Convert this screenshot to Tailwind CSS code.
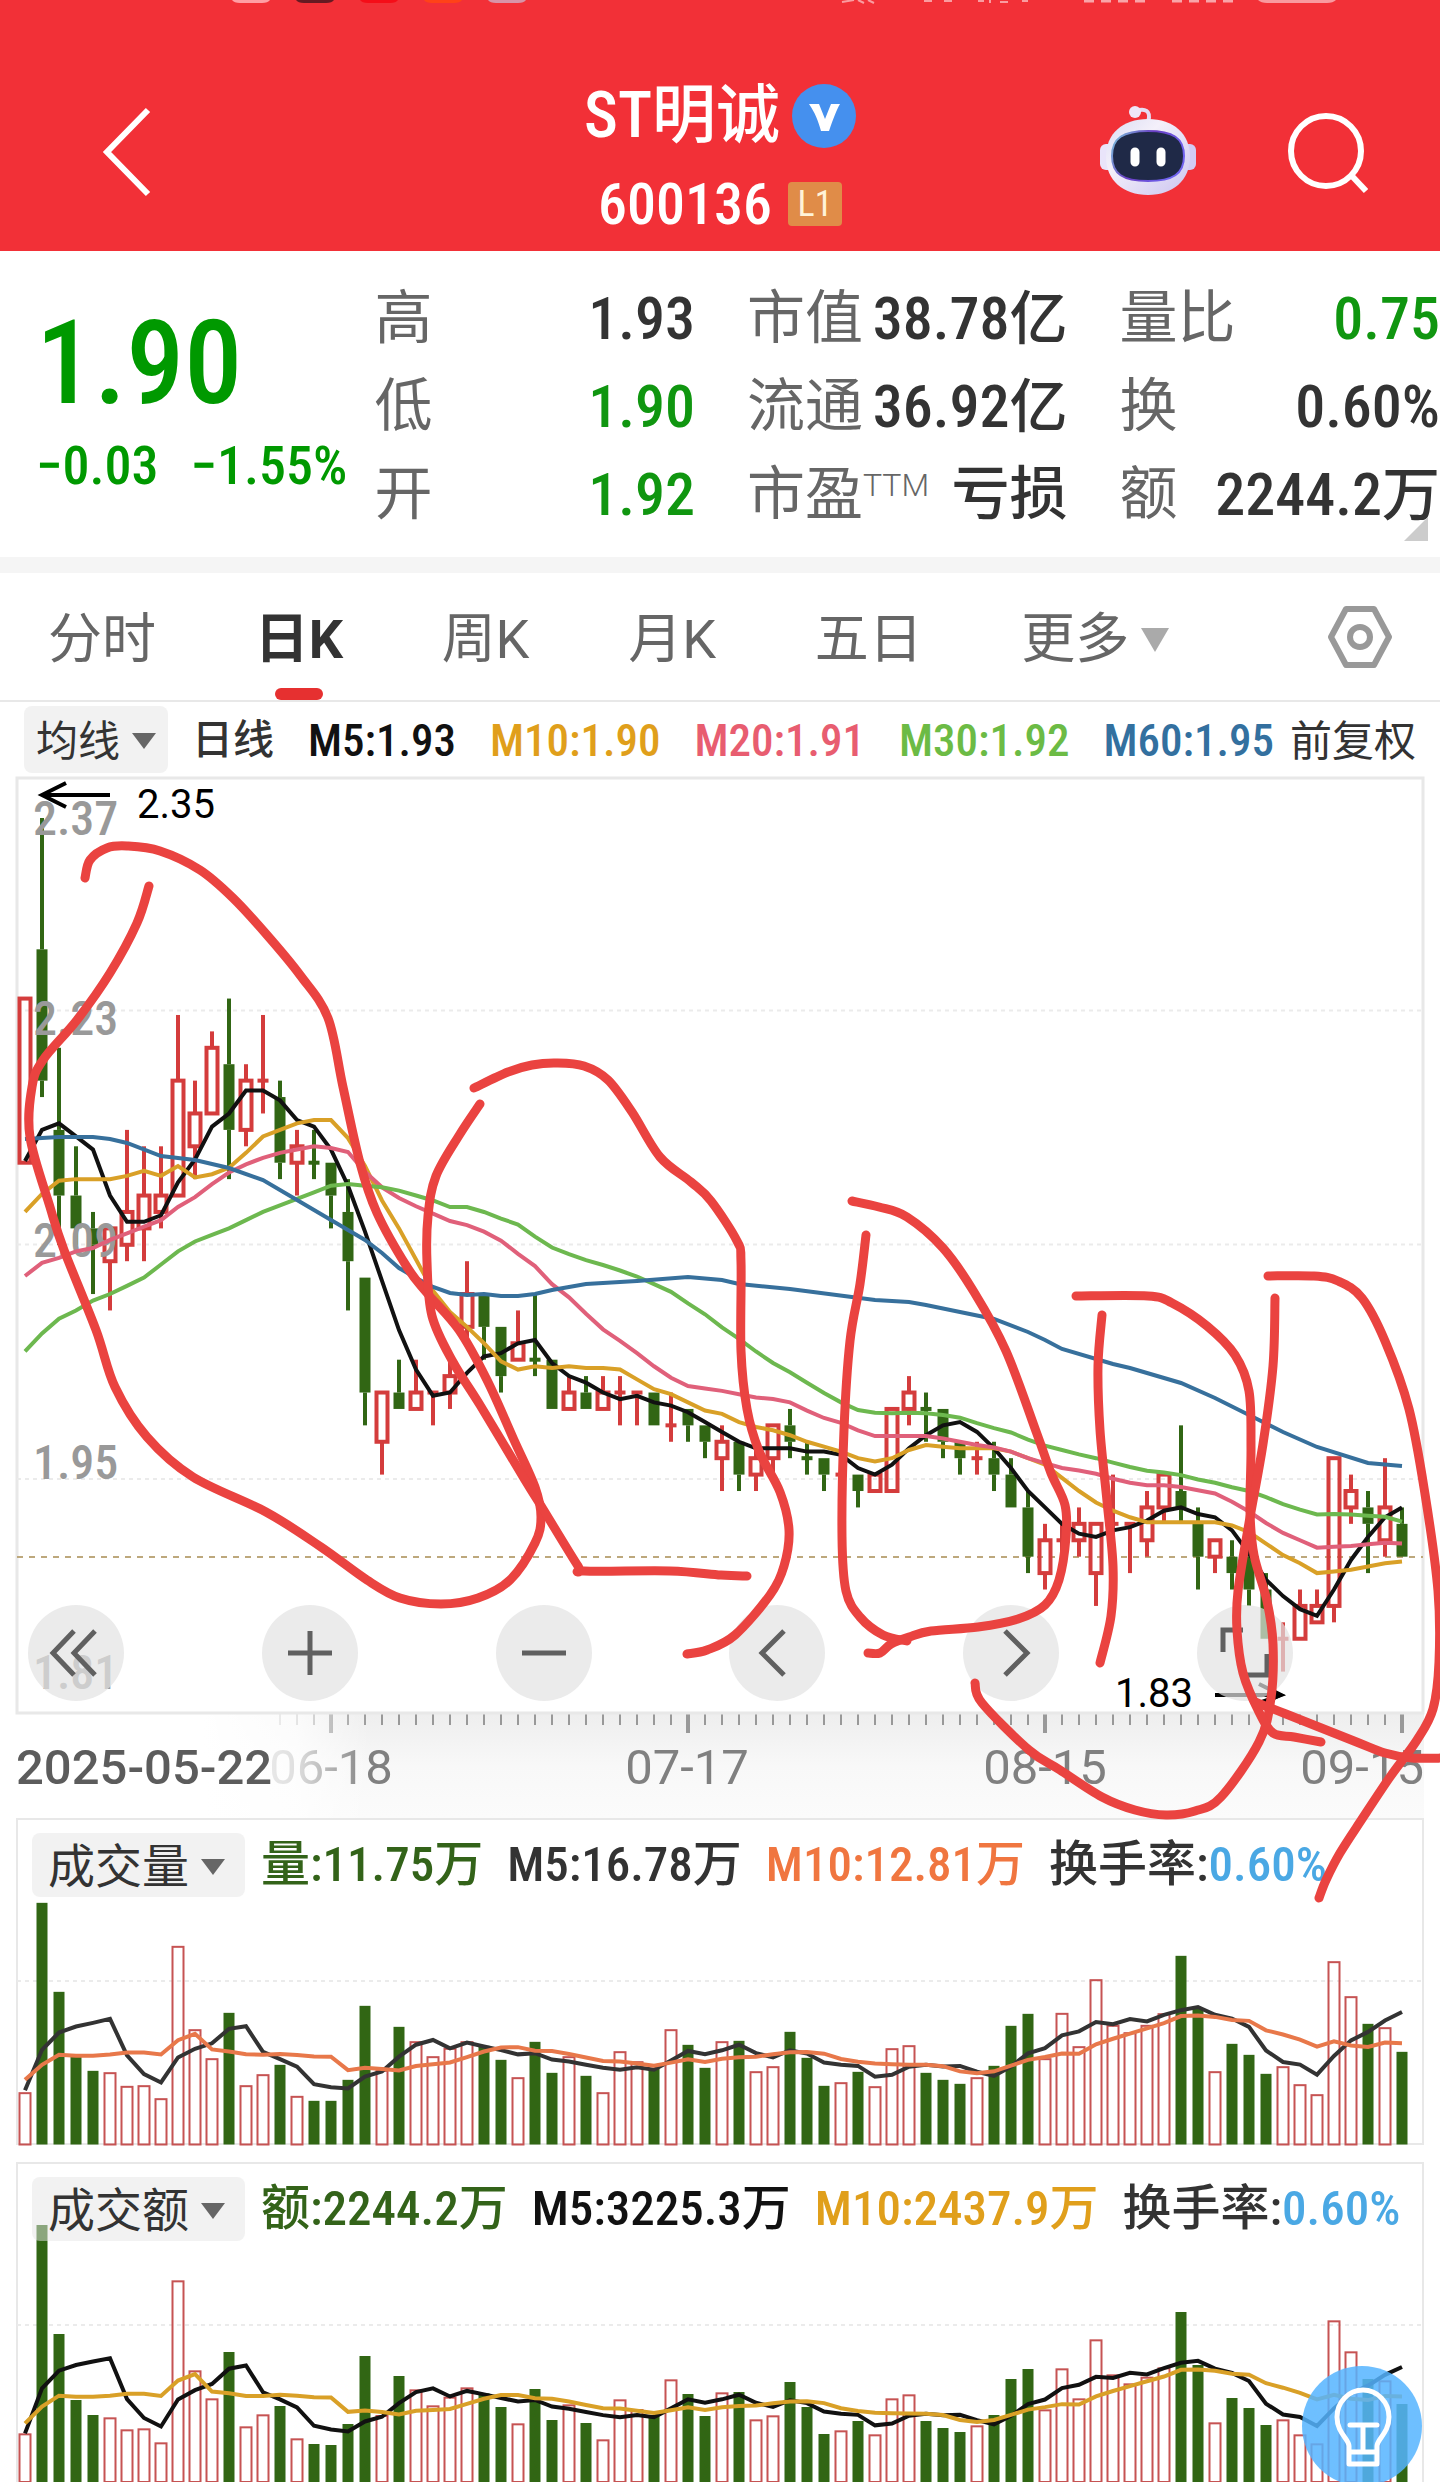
<!DOCTYPE html>
<html lang="zh-CN">
<head>
    <meta charset="UTF-8">
    <meta name="viewport" content="width=device-width, initial-scale=1.0">
    <title>ST明诚 600136</title>
    <script src="https://cdn.jsdelivr.net/npm/@tailwindcss/browser@4"></script>
</head>
<body class="bg-white text-[#333] font-['Roboto_Condensed','Roboto','Noto_Sans_CJK_SC',sans-serif] overflow-x-hidden">
    <!-- Header -->
    <header class="relative h-[251px] bg-[#f23037] text-white overflow-hidden">
        <svg class="absolute top-0 left-0 w-full h-1" viewBox="0 0 1440 4" preserveAspectRatio="none" aria-hidden="true">
            <path d="M232 0h38q-2 3-8 3h-22q-6 0-8-3" fill="#ff9ea4"/>
            <path d="M296 0h38q-2 3-8 3h-22q-6 0-8-3" fill="#661a22"/>
            <path d="M360 0h38q-2 3-8 3h-22q-6 0-8-3" fill="#f50d18"/>
            <path d="M424 0h38q-2 3-8 3h-22q-6 0-8-3" fill="#ff4218"/>
            <path d="M488 0h38q-2 3-8 3h-22q-6 0-8-3" fill="#d894a8"/>
            <path d="M842 2l12-2M858 0l6 3M868 0l6 3M924 1h8M944 1h8M978 1h6M990 0v3M1000 2h8M1022 1h6" stroke="#fa9ca0" stroke-width="2"/>
            <path d="M1084 1h10M1101 1h10M1118 1h10M1135 1h10M1172 1h10M1189 1h10M1206 1h10M1223 1h10" stroke="#f9a5a9" stroke-width="3"/>
            <path d="M1258 0h78q-3 3-9 3h-60q-6 0-9-3" fill="#f99a9f"/>
        </svg>
        <div class="h-full flex items-center justify-between pt-[52px] px-[72px]">
            <div class="flex-1">
                <button type="button" aria-label="返回" class="block p-6">
                    <svg class="w-[60px] h-[92px]" viewBox="0 0 60 92" fill="none" stroke="#fff" stroke-width="6"><path d="M52 4 11 46l41 42"/></svg>
                </button>
            </div>
            <div class="flex flex-col items-center pt-4">
                <h1 class="flex items-center gap-3 text-[64px] leading-[88px] font-medium">
                    ST明诚
                    <svg class="w-16 h-16" viewBox="0 0 64 64"><circle cx="32" cy="32" r="32" fill="#4590ee"/><path d="M17 20h10l6 15 6-15h9c-4 7-6 13-11 27h-8c-3-11-6-18-12-27" fill="#fff"/></svg>
                </h1>
                <p class="flex items-center gap-4 text-[58px] leading-[88px] font-medium">
                    600136
                    <span class="w-[54px] h-11 rounded-sm bg-[#e08c48] text-[#fff3d8] text-[36px] leading-[44px] text-center font-normal">L1</span>
                </p>
            </div>
            <div class="flex-1 flex justify-end items-center gap-[88px]">
                <button type="button" aria-label="智能助手">
                    <svg class="w-24 h-[92px]" viewBox="0 0 96 92">
                        <defs>
                            <linearGradient id="robot-head" x2="1" y2="1"><stop stop-color="#d9dcf4"/><stop offset=".35" stop-color="#f4f0fa"/><stop offset="1" stop-color="#cbc4f0"/></linearGradient>
                            <linearGradient id="robot-rim" x2="1" y2=".4"><stop stop-color="#7cc8dc"/><stop offset=".5" stop-color="#6a3fc4"/><stop offset="1" stop-color="#6f62ee"/></linearGradient>
                        </defs>
                        <path d="M48 16C52 4 44 2 36 5" fill="none" stroke="#e6dcf3" stroke-width="4"/>
                        <circle cx="35" cy="6" r="6" fill="#efe6f8"/>
                        <rect x="0" y="38" width="14" height="26" rx="6" fill="#e9e4fa"/>
                        <rect x="82" y="38" width="14" height="26" rx="6" fill="#d2cbf4"/>
                        <path d="M48 13c26 0 42 15 42 38S73 89 48 89 6 74 6 51s16-38 42-38" fill="url(#robot-head)"/>
                        <path d="M48 25c25 0 36 7 36 25S73 75 48 75 12 68 12 50s11-25 36-25" fill="#1f2947" stroke="url(#robot-rim)" stroke-width="2"/>
                        <path d="M35 46v10M61 46v10" stroke="#fff" stroke-width="9" stroke-linecap="round"/>
                    </svg>
                </button>
                <button type="button" aria-label="搜索">
                    <svg class="w-[84px] h-[84px]" viewBox="0 0 84 84" fill="none" stroke="#fff" stroke-width="6"><circle cx="42" cy="41" r="35"/><path d="m67 65 15 16"/></svg>
                </button>
            </div>
        </div>
    </header>

    <!-- Quote -->
    <section class="relative flex pt-6 h-[306px]">
        <div class="w-[26%] shrink-0 pl-9 text-[#009900]">
            <p class="text-[116px] leading-[120px] font-medium pt-7">1.90</p>
            <p class="flex gap-8 text-[54px] leading-[54px] font-medium pt-4 whitespace-nowrap"><span>−0.03</span><span>−1.55%</span></p>
        </div>
        <dl class="flex-1 grid grid-cols-3 gap-x-[52px] content-start text-[60px] leading-[87px] font-medium whitespace-nowrap">
            <div class="flex justify-between"><dt class="text-[58px] font-normal text-[#666]">高</dt><dd>1.93</dd></div>
            <div class="flex justify-between"><dt class="text-[58px] font-normal text-[#666]">市值</dt><dd>38.78<span class="text-[58px]">亿</span></dd></div>
            <div class="flex justify-between"><dt class="text-[58px] font-normal text-[#666]">量比</dt><dd class="text-[#109610]">0.75</dd></div>
            <div class="flex justify-between"><dt class="text-[58px] font-normal text-[#666]">低</dt><dd class="text-[#109610]">1.90</dd></div>
            <div class="flex justify-between"><dt class="text-[58px] font-normal text-[#666]">流通</dt><dd>36.92<span class="text-[58px]">亿</span></dd></div>
            <div class="flex justify-between"><dt class="text-[58px] font-normal text-[#666]">换</dt><dd>0.60%</dd></div>
            <div class="flex justify-between"><dt class="text-[58px] font-normal text-[#666]">开</dt><dd class="text-[#109610]">1.92</dd></div>
            <div class="flex justify-between"><dt class="flex text-[58px] font-normal text-[#666]">市盈<span class="font-['Roboto',sans-serif] text-[32px] leading-[68px] font-light">TTM</span></dt><dd class="text-[58px]">亏损</dd></div>
            <div class="flex justify-between"><dt class="text-[58px] font-normal text-[#666]">额</dt><dd>2244.2<span class="text-[58px]">万</span></dd></div>
        </dl>
        <svg class="absolute right-3 bottom-4 w-6 h-6" viewBox="0 0 24 24"><path d="M24 0v24H0z" fill="#ccc"/></svg>
    </section>

    <div class="h-4 bg-[#f5f5f5]"></div>

    <!-- Period tabs -->
    <nav class="h-[129px] flex items-center justify-between px-12 border-b-2 border-[#e8e8e8] font-['Roboto','Noto_Sans_CJK_SC',sans-serif] text-[54px] text-[#666] whitespace-nowrap">
        <button type="button" class="pt-1.5">分时</button>
        <button type="button" class="relative h-full pt-1.5 font-bold text-[#333]">日K<span class="absolute bottom-0 left-1/2 -translate-x-1/2 w-12 h-3 rounded-full bg-[#e63030]"></span></button>
        <button type="button" class="pt-1.5">周K</button>
        <button type="button" class="pt-1.5">月K</button>
        <button type="button" class="pt-1.5">五日</button>
        <button type="button" class="pt-1.5 flex items-center gap-3">更多<svg class="w-7 h-6" viewBox="0 0 28 24"><path d="M0 0h28L14 24z" fill="#aaa"/></svg></button>
        <button type="button" aria-label="设置" class="ml-[60px]">
            <svg class="w-16 h-[62px]" viewBox="0 0 64 62" fill="none" stroke="#999" stroke-width="6" stroke-linejoin="round"><path d="M18 3h28l15 28-15 28H18L3 31z"/><circle cx="32" cy="31" r="10"/></svg>
        </button>
    </nav>

    <!-- Moving average legend -->
    <div class="h-[74px] flex items-center justify-between px-6 text-[45px] font-medium whitespace-nowrap">
        <div class="flex items-center gap-6">
            <button type="button" class="h-[67px] px-3 rounded-lg bg-[#f2f2f2] flex items-center gap-3 pt-1 text-[42px] font-normal">均线<svg class="w-6 h-4" viewBox="0 0 24 16"><path d="M0 0h24L12 16z" fill="#666"/></svg></button>
            <span class="pt-1 text-[41px]">日线</span>
        </div>
        <span class="pt-1 text-[#111]">M5:1.93</span>
        <span class="pt-1 text-[#e09f1b]">M10:1.90</span>
        <span class="pt-1 text-[#e85d70]">M20:1.91</span>
        <span class="pt-1 text-[#6cbb45]">M30:1.92</span>
        <div class="flex items-center gap-4">
            <span class="pt-1 text-[#33709f]">M60:1.95</span>
            <span class="pt-1 text-[42px] font-normal">前复权</span>
        </div>
    </div>

    <!-- Charts share one coordinate space, so the pen layer can run across all of them -->
    <main class="relative">
        <div class="relative">
            <svg id="price-chart" class="block w-full h-auto overflow-visible" viewBox="0 776 1440 938">
                <path d="M17 1713V778H1423V1713Z" fill="none" stroke="#e8e8e8" stroke-width="3"/>
                <path d="M17 1010.5H1423M17 1244.5H1423M17 1479H1423" stroke="#ebebeb" stroke-width="2" stroke-dasharray="4 4"/>
                <path d="M17 1557H1423" stroke="#bda87c" stroke-width="2" stroke-dasharray="6 6"/>
                <g id="candles"></g>
                <g fill="#999" font-size="48" font-weight="500">
                    <text x="33" y="835">2.37</text>
                    <text x="33" y="1035">2.23</text>
                    <text x="33" y="1257">2.09</text>
                    <text x="33" y="1479">1.95</text>
                    <text x="33" y="1689">1.81</text>
                </g>
                <g id="price-lines" fill="none" stroke-width="4"></g>
                <g fill="none" stroke="#000" stroke-width="4"><path d="M110 795H43M66 783 42 795l24 12M1215 1695h66M1259 1684l22 11-22 8"/></g>
                <path d="m1268 1688 17 7-17 8z"/>
                <g class="font-['Roboto',sans-serif]" font-size="40">
                    <text x="137" y="818">2.35</text>
                    <text x="1115" y="1707">1.83</text>
                </g>
            </svg>
            <div class="absolute inset-x-0 bottom-[13px] flex justify-between pl-7 pr-[147px]">
                <button type="button" aria-label="最早" class="w-24 h-24 rounded-full bg-[#e3e3e3]/70"><svg viewBox="0 0 96 96" fill="none" stroke="#606060" stroke-width="5"><path d="M46 26 25 48l21 22M67 26 46 48l21 22"/></svg></button>
                <button type="button" aria-label="放大" class="w-24 h-24 rounded-full bg-[#e3e3e3]/70"><svg viewBox="0 0 96 96" stroke="#606060" stroke-width="5"><path d="M26 48h44M48 26v44"/></svg></button>
                <button type="button" aria-label="缩小" class="w-24 h-24 rounded-full bg-[#e3e3e3]/70"><svg viewBox="0 0 96 96" stroke="#606060" stroke-width="5"><path d="M26 48h44"/></svg></button>
                <button type="button" aria-label="向左" class="w-24 h-24 rounded-full bg-[#e3e3e3]/70"><svg viewBox="0 0 96 96" fill="none" stroke="#606060" stroke-width="5"><path d="M55 26 33 48l22 22"/></svg></button>
                <button type="button" aria-label="向右" class="w-24 h-24 rounded-full bg-[#e3e3e3]/70"><svg viewBox="0 0 96 96" fill="none" stroke="#606060" stroke-width="5"><path d="M42 26 64 48 42 70"/></svg></button>
                <button type="button" aria-label="全屏" class="w-24 h-24 rounded-full bg-[#e3e3e3]/70"><svg viewBox="0 0 96 96" fill="none" stroke="#606060" stroke-width="5"><path d="M26 47V25h20M50 70h20V49"/></svg></button>
            </div>
        </div>

        <svg class="block w-full h-auto" viewBox="0 1714 1440 104">
            <defs>
                <linearGradient id="axis-bg" x2="0" y2="1"><stop stop-color="#eee"/><stop offset=".5" stop-color="#f8f8f8"/><stop offset="1" stop-color="#fbfbfb"/></linearGradient>
                <linearGradient id="axis-fade"><stop offset=".55" stop-color="#fff"/><stop offset=".8" stop-color="#fff" stop-opacity=".75"/><stop offset="1" stop-color="#fff" stop-opacity="0"/></linearGradient>
            </defs>
            <rect x="16" y="1714" width="1408" height="104" fill="url(#axis-bg)"/>
            <g id="ticks" stroke="#999"></g>
            <g class="font-['Roboto',sans-serif]" fill="#808080" font-size="49" text-anchor="middle">
                <text x="331" y="1784">06-18</text>
                <text x="687" y="1784">07-17</text>
                <text x="1045" y="1784">08-15</text>
                <text x="1424" y="1784" text-anchor="end">09-15</text>
            </g>
            <rect y="1714" width="370" height="104" fill="url(#axis-fade)"/>
            <text class="font-['Roboto',sans-serif]" x="16" y="1784" fill="#5c5c5c" font-size="49" font-weight="500">2025-05-22</text>
        </svg>

        <!-- Volume -->
        <section class="grid">
            <svg class="[grid-area:1/1] block w-full h-auto" viewBox="0 1818 1440 344">
                <path d="M17 2144V1819H1423V2144Z" fill="none" stroke="#e8e8e8" stroke-width="2"/>
                <path d="M17 1981H1423" stroke="#ebebeb" stroke-width="2" stroke-dasharray="4 4"/>
                <g id="volume-bars"></g>
                <g id="volume-lines" fill="none" stroke-width="4"></g>
            </svg>
            <div class="[grid-area:1/1] self-start relative flex items-center gap-6 mt-[15px] pl-8 text-[49px] leading-[64px] font-medium whitespace-nowrap">
                <button type="button" class="h-16 w-[213px] -mr-2 pl-4 pt-1 rounded-lg bg-[#efefef]/80 flex items-center gap-3 text-[47px] font-normal">成交量<svg class="w-6 h-4" viewBox="0 0 24 16"><path d="M0 0h24L12 16z" fill="#666"/></svg></button>
                <span class="text-[#336319]">量:11.75万</span>
                <span>M5:16.78万</span>
                <span class="text-[#f07640]">M10:12.81万</span>
                <span>换手率:<span class="text-[#4aa8e4]">0.60%</span></span>
            </div>
        </section>

        <!-- Turnover -->
        <section class="grid">
            <svg class="[grid-area:1/1] block w-full h-auto" viewBox="0 2162 1440 320">
                <path d="M17 2490V2163H1423V2490" fill="none" stroke="#e8e8e8" stroke-width="2"/>
                <path d="M17 2325H1423" stroke="#ebebeb" stroke-width="2" stroke-dasharray="4 4"/>
                <g id="amount-bars"></g>
                <g id="amount-lines" fill="none" stroke-width="4"></g>
            </svg>
            <div class="[grid-area:1/1] self-start relative flex items-center gap-6 mt-[15px] pl-8 text-[49px] leading-[64px] font-medium whitespace-nowrap">
                <button type="button" class="h-16 w-[213px] -mr-2 pl-4 pt-1 rounded-lg bg-[#e6e6e6]/50 flex items-center gap-3 text-[47px] font-normal">成交额<svg class="w-6 h-4" viewBox="0 0 24 16"><path d="M0 0h24L12 16z" fill="#666"/></svg></button>
                <span class="text-[#336319]">额:2244.2万</span>
                <span class="text-[#111]">M5:3225.3万</span>
                <span class="text-[#e09f1b]">M10:2437.9万</span>
                <span>换手率:<span class="text-[#4aa8e4]">0.60%</span></span>
            </div>
        </section>

        <!-- Pen marks -->
        <svg id="pen" class="absolute inset-0 w-full h-full pointer-events-none" viewBox="0 776 1440 1706" fill="none" stroke="#ea4340" stroke-width="9" stroke-linecap="round" stroke-linejoin="round"></svg>

        <button type="button" aria-label="提示" class="absolute right-[18px] -bottom-1 w-[120px] h-[120px] rounded-full bg-[#55b4ff]/85">
            <svg viewBox="0 0 120 120" fill="none" stroke="#fff" stroke-width="5" stroke-linecap="round" stroke-linejoin="round">
                <path d="M47 98V80c0-7-12-13-12-29a26 27 0 0 1 52 0c0 16-12 22-12 29v18zM47 86h28M48 59h27M61 59v27"/>
            </svg>
        </button>
    </main>

    <script>
        const STEP = 17;
        const START = 25;
        const RED = '#d43c3c';
        const GREEN = '#316614';

        // [open, close, high, low] in cents, a trailing 1 marks a flat day drawn as a fall
        const candles = [
            [214,224,224,214],[227,219,235,218],[216,212,221,209],[212,210,215,209],[210,209,211,206],
            [208,210,210,205],[209,211,216,208],[210,212,215,208],[211,212,215,210],[212,219,223,212],
            [215,217,219,213],[217,221,222,217],[220,216,224,213],[216,219,220,215],[219,219,223,217],
            [218,214,219,213],[214,215,216,212],[214,214,216,213,1],[214,212,214,210],[211,208,213,205],
            [207,200,207,198],[197,200,200,195],[200,199,202,199],[199,200,202,199],[200,200,200,198],
            [200,201,202,199],[204,206,208,203],[206,204,206,202],[204,201,204,200],[202,203,205,202],
            [202,202,206,201,1],[202,199,202,199],[199,200,201,199],[200,199,201,199],[199,200,201,199],
            [200,200,201,198],[200,200,200,198],[200,198,200,198],[198,198,200,197],[199,198,199,197],
            [198,197,198,196],[196,197,198,194],[197,195,197,194],[195,196,197,194],[196,198,198,195],
            [198,197,199,196],[196,196,197,195,1],[196,195,196,194],[195,195,196,194],[195,194,195,193],
            [194,195,195,194],[194,199,199,194],[199,200,201,198],[199,199,200,197,1],[199,197,199,196],
            [197,196,197,195],[196,196,197,195],[196,195,197,194],[195,193,196,193],[193,190,194,189],
            [189,191,192,188],[191,191,192,190],[191,192,193,190],[189,192,192,187],[192,192,195,191],
            [192,192,192,189],[191,193,194,190],[193,195,195,192],[194,193,198,192],[192,190,193,188],
            [190,191,191,189],[190,189,191,188],[190,188,191,187],[188,185,189,185],[185,185,186,183],
            [185,187,188,185],[186,187,188,186],[187,196,196,186],[193,194,195,192],[193,192,194,189],
            [191,193,196,190],[192,190,193,190]
        ];

        // bar heights in thirds of a chart unit
        const volumes = [
            157,725,458,264,221,217,176,178,139,596,346,259,395,178,211,239,146,131,131,194,416,224,353,310,265,290,310,296,254,202,308,
            215,265,206,157,280,250,228,346,299,230,310,311,220,235,338,260,176,187,218,175,289,298,215,194,182,202,236,356,392,259,395,
            295,496,359,337,359,394,566,407,220,302,269,212,235,181,151,550,445,362,352,278
        ];
        const amounts = [
            146,771,444,246,201,194,158,161,119,605,335,251,390,167,203,228,131,114,111,174,378,201,318,278,230,256,284,266,225,176,279,
            186,233,177,128,248,219,201,308,264,198,269,270,188,200,300,225,144,155,183,143,251,263,183,162,150,170,201,309,339,218,341,
            251,428,323,296,316,344,510,351,179,252,222,171,188,143,116,485,392,309,305,234
        ];

        const x = i => START + i * STEP;
        const priceY = p => 818 + (235 - p) * 16.415;
        const rect = (cx, top, bottom, w, attrs) =>
            `<rect x="${cx - w / 2}" y="${top}" width="${w}" height="${bottom - top}" ${attrs}/>`;
        const isDown = c => c[1] < c[0] || c[4] === 1;

        function average(data, n, lead) {
            return data.map((_, i) => i < n - 1
                ? lead[i]
                : data.slice(i - n + 1, i + 1).reduce((a, b) => a + b, 0) / n);
        }

        function line(points, color) {
            return `<polyline points="${points.map(p => p.join(',')).join(' ')}" stroke="${color}"/>`;
        }

        function drawPrice() {
            document.getElementById('candles').innerHTML = candles.map((c, i) => {
                const [open, close, high, low] = c;
                const top = priceY(Math.max(open, close));
                const bottom = priceY(Math.min(open, close));
                const color = isDown(c) ? GREEN : RED;
                let out = '';
                if (priceY(high) < top) out += rect(x(i), priceY(high), top, 4, `fill="${color}"`);
                if (priceY(low) > bottom) out += rect(x(i), bottom, priceY(low), 4, `fill="${color}"`);
                if (top === bottom) out += rect(x(i), top - 2, top + 2, 11, `fill="${color}"`);
                else if (isDown(c)) out += rect(x(i), top, bottom, 11, `fill="${color}"`);
                else out += rect(x(i), top, bottom, 11, `fill="none" stroke="${color}" stroke-width="4"`);
                return out;
            }).join('');

            const closes = candles.map(c => c[1]);
            const m5 = average(closes, 5, [214.1, 216, 216.4, 215.6]);
            const m10 = average(closes, 10, [211, 212.1, 212.9, 213, 213, 213, 213.2, 213.5, 213.2]);
            const m20 = average(closes, 20, [207.1, 207.9, 208.2, 208.6, 208.8, 209.3, 209.7, 210.1, 210.5, 211.3, 211.9, 212.7, 213.4, 213.9, 214.3, 214.6, 214.8, 215, 214.9]);
            const m30 = average(closes, 30, [202.5, 203.6, 204.5, 205, 205.6, 206, 206.5, 207, 207.8, 208.6, 209.2, 209.6, 210, 210.5, 211, 211.4, 211.8, 212.2, 212.6, 212.7, 212.6, 212.5, 212.3, 212, 211.7, 211.3, 211.3, 211, 210.6]);
            const m60 = [[0,1139],[2,1137],[4,1137],[5,1139],[6,1143],[8,1156],[10,1160],[12,1168],[14,1180],[16,1200],[19,1230],[20,1240],[21,1253],[22,1268],[23,1278],[24,1287],[25,1293],[26,1295],[27,1294],[28,1296],[29,1296],[30,1294],[31,1290],[33,1284],[36,1281],[39,1277],[41,1280],[42,1284],[45,1289],[50,1300],[52,1302],[53,1305],[55,1312],[57,1319],[59,1332],[60,1340],[61,1349],[64,1364],[65,1368],[68,1383],[70,1398],[72,1415],[74,1432],[76,1447],[79,1463],[81,1466]];
            const toPoints = data => data.map((p, i) => [x(i), priceY(p)]);
            document.getElementById('price-lines').innerHTML =
                line(toPoints(m5), '#111') +
                line(toPoints(m10), '#d9a027') +
                line(toPoints(m20), '#e0607a') +
                line(toPoints(m30), '#6db84f') +
                line(m60.map(([i, y]) => [x(i), y]), '#37709c');
        }

        function drawBars(name, data, base, lead5, lead10, color5, color10) {
            document.getElementById(`${name}-bars`).innerHTML = data.map((v, i) => isDown(candles[i])
                ? rect(x(i), base - v / 3, base, 11, `fill="${GREEN}"`)
                : rect(x(i), base - v / 3 + 1, base, 11, 'fill="none" stroke="#c65353" stroke-width="2"')).join('');
            const toPoints = d => d.map((v, i) => [x(i), base - v / 3]);
            document.getElementById(`${name}-lines`).innerHTML =
                line(toPoints(average(data, 5, lead5)), color5) +
                line(toPoints(average(data, 10, lead10)), color10);
        }

        function drawTicks() {
            let out = '';
            for (let i = 15; i < 82; i++) {
                const major = (i - 18) % 21 === 0;
                out += `<path d="M${x(i)} 1714v${major ? 19 : 11}" stroke-width="${major ? 4 : 2}"/>`;
            }
            document.getElementById('ticks').innerHTML = out;
        }

        const strokes = [
            [[85,878],[90,860],[107,848],[127,846],[160,851],[200,870],[233,898],[267,935],[300,975],[328,1018],[343,1087],[360,1163],[377,1213],[407,1267],[427,1293],[459,1330],[487,1380],[514,1440],[535,1487],[541,1517],[535,1543],[510,1580],[478,1598],[441,1604],[400,1598],[367,1580],[321,1547],[266,1512],[193,1477],[147,1437],[115,1387],[96,1330],[64,1250],[50,1207],[30,1137],[32,1087],[43,1060],[77,1020],[110,973],[137,923],[149,886]],
            [[474,1088],[508,1072],[532,1065],[556,1063],[584,1066],[608,1080],[632,1112],[660,1157],[691,1182],[711,1201],[737,1241],[741,1262],[741,1351],[747,1409],[759,1451],[780,1492],[789,1530],[784,1566],[770,1595],[735,1635],[707,1650],[687,1654]],
            [[480,1104],[460,1134],[436,1176],[428,1216],[427,1262],[432,1316],[453,1362],[480,1405],[525,1480],[543,1509],[578,1566],[584,1571],[670,1571],[721,1575],[747,1576]],
            [[852,1201],[879,1207],[907,1217],[943,1248],[974,1292],[1006,1351],[1037,1434],[1051,1473],[1065,1505],[1066,1537],[1059,1580],[1045,1605],[1018,1619],[978,1627],[931,1631],[909,1637],[891,1644],[880,1653],[868,1653]],
            [[866,1235],[860,1284],[850,1341],[844,1430],[842,1537],[846,1591],[860,1617],[883,1635],[907,1641]],
            [[1076,1296],[1148,1296],[1172,1303],[1207,1326],[1235,1355],[1249,1391],[1251,1448],[1250,1512],[1254,1555],[1267,1601],[1273,1644],[1271,1698],[1259,1742],[1221,1797],[1195,1811],[1166,1815],[1135,1810],[1102,1797],[1060,1770],[1029,1750],[982,1703],[975,1683]],
            [[1102,1315],[1098,1366],[1100,1430],[1107,1501],[1113,1566],[1111,1616],[1100,1663]],
            [[1275,1298],[1273,1366],[1263,1444],[1249,1523],[1238,1591],[1237,1630],[1243,1673],[1259,1712],[1273,1733],[1294,1737],[1321,1742]],
            [[1255,1702],[1286,1714],[1354,1741],[1385,1753],[1412,1758],[1445,1758]],
            [[1268,1276],[1314,1276],[1338,1281],[1362,1298],[1385,1341],[1409,1409],[1425,1494],[1438,1591],[1439,1662],[1433,1709],[1417,1740],[1390,1777],[1362,1819],[1340,1853],[1326,1880],[1319,1898]]
        ];

        // Catmull-Rom through the points, written as cubic segments
        function smooth(pts) {
            let d = `M${pts[0]}`;
            for (let i = 0; i < pts.length - 1; i++) {
                const a = pts[i - 1] || pts[i], b = pts[i], c = pts[i + 1], e = pts[i + 2] || c;
                d += `C${b[0] + (c[0] - a[0]) / 6},${b[1] + (c[1] - a[1]) / 6} ${c[0] - (e[0] - b[0]) / 6},${c[1] - (e[1] - b[1]) / 6} ${c}`;
            }
            return d;
        }

        drawPrice();
        drawBars('volume', volumes, 2144.5, [163, 284, 336, 354], [194, 239, 269, 266, 266, 270, 276, 276, 270], '#333', '#e8784a');
        drawBars('amount', amounts, 2482, [146, 281, 334, 351], [176, 226, 259, 256, 256, 259, 265, 265, 258], '#111', '#d9a027');
        drawTicks();
        document.getElementById('pen').innerHTML = strokes.map(s => `<path d="${smooth(s)}"/>`).join('');
    </script>
</body>
</html>
